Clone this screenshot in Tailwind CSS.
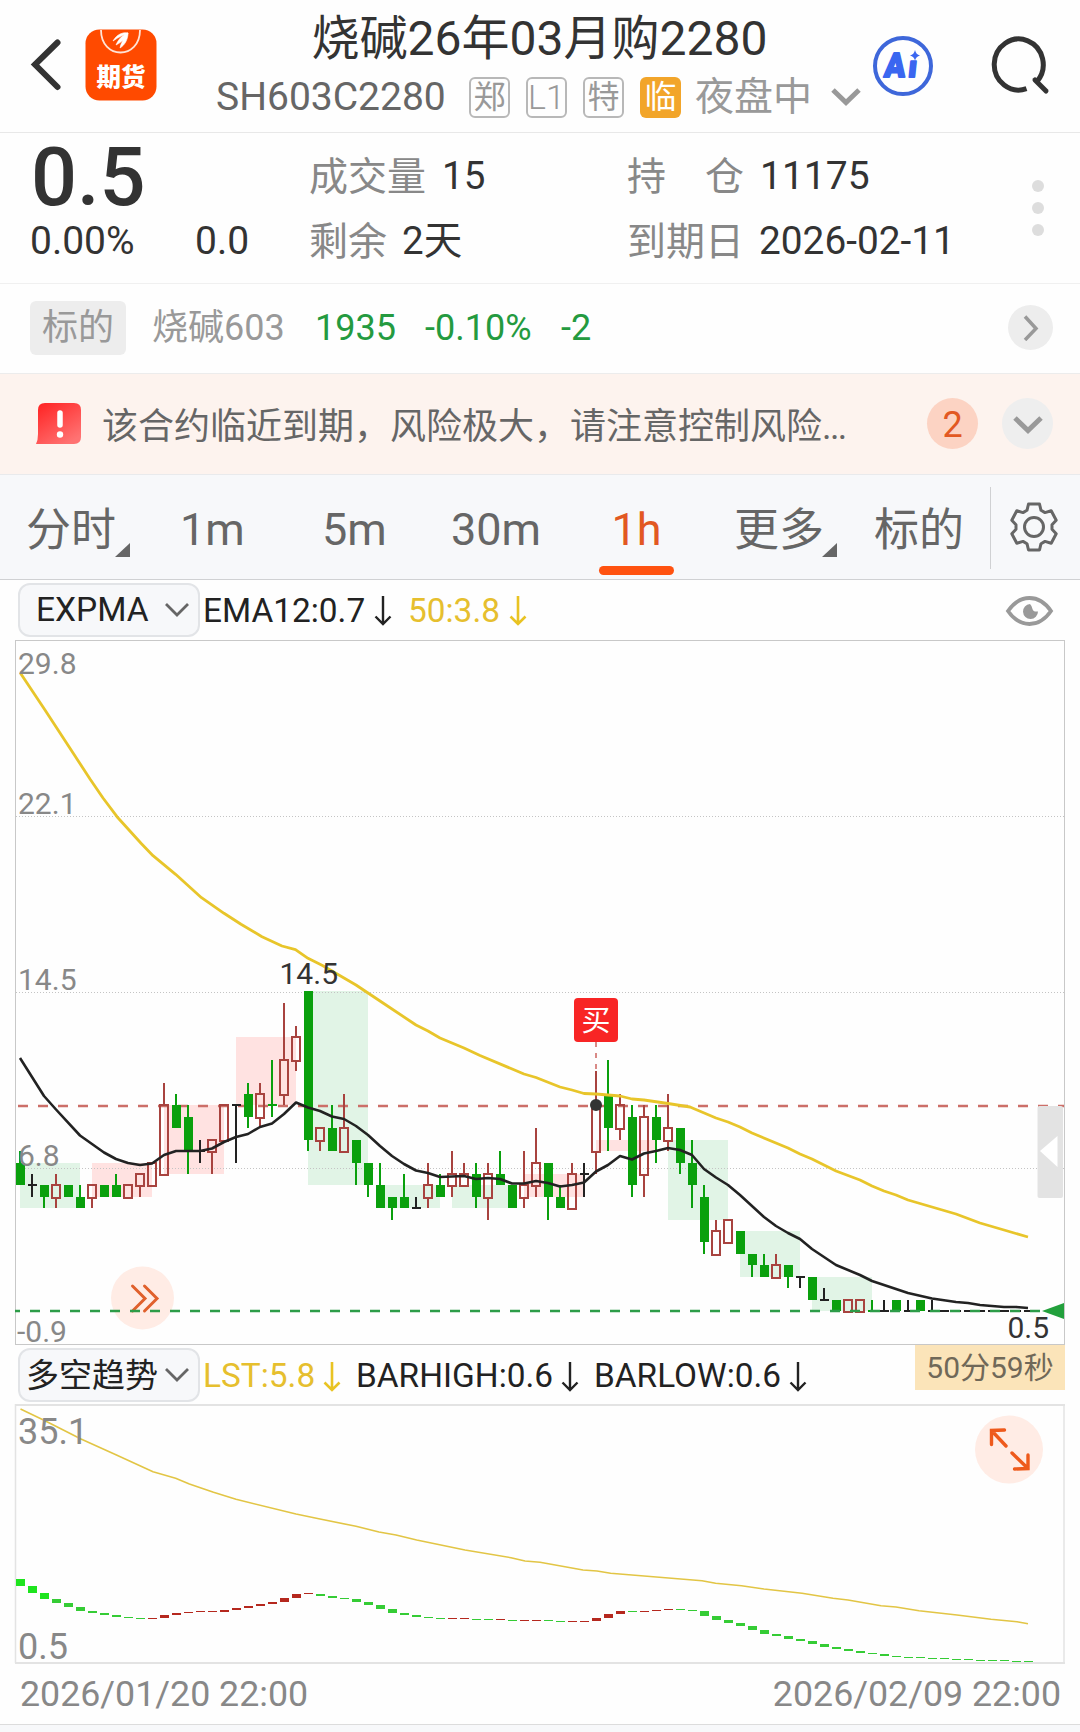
<!DOCTYPE html>
<html lang="zh-CN">
<head>
    <meta charset="UTF-8">
    <meta name="viewport" content="width=device-width, initial-scale=1.0">
    <title>烧碱26年03月购2280</title>
    <script src="https://cdn.jsdelivr.net/npm/@tailwindcss/browser@4"></script>
</head>
<body class="w-[1080px] h-[1732px] overflow-hidden bg-[#fefefe] font-['Roboto','Noto_Sans_CJK_SC',sans-serif] text-[#333]">

    <!-- title bar -->
    <header class="flex h-[133px] border-b border-[#e8e8e8]">
        <svg class="ml-[30px] mt-[38px] shrink-0" width="32" height="54" fill="none" stroke="#333" stroke-width="6" stroke-linecap="round" stroke-linejoin="miter">
            <path d="M27.500 4.500L5 26.500L27.500 49"/>
        </svg>
        <svg class="ml-[23px] mt-[29px] shrink-0" width="72" height="72">
            <rect x=".5" y=".5" width="71" height="71" rx="14" fill="#ff4a00"/>
            <path d="M16 1C16 31 55 31 55 1" fill="none" stroke="#ffe3d6" stroke-width="1.800"/>
            <path d="M28 12C32 5 38 3 43 4C38 6 34 8 28 12ZM31 16C34 9 39 5 43 4C41 9 37 13 31 16ZM35 19C36 13 40 8 43 4C43 10 40 16 35 19Z" fill="#fff" stroke="#fff" stroke-width=".6"/>
            <text x="36" y="56.500" text-anchor="middle" font-size="24.500" font-weight="900" fill="#fff">期货</text>
        </svg>
        <div class="ml-[60px] flex w-[645px] shrink-0 flex-col">
            <h1 class="mt-[9px] whitespace-nowrap text-center text-[48px] leading-[60px]">烧碱26年03月购2280</h1>
            <div class="mt-[7px] flex h-[42px] items-center whitespace-nowrap">
                <span class="-ml-px w-[253px] text-[39px] leading-[42px] text-[#666]">SH603C2280</span>
                <span class="flex h-[41px] w-[41px] items-center justify-center rounded-[6px] border-2 border-[#b8b8b8] text-[32px] leading-[40px] text-[#999]">郑</span>
                <span class="ml-[16px] flex h-[41px] w-[41px] items-center justify-center rounded-[6px] border-2 border-[#b8b8b8] text-[34px] font-light leading-[40px] text-[#999]">L1</span>
                <span class="ml-[16px] flex h-[41px] w-[41px] items-center justify-center rounded-[6px] border-2 border-[#b8b8b8] text-[32px] leading-[40px] text-[#999]">特</span>
                <span class="ml-[16px] flex h-[41px] w-[41px] items-center justify-center rounded-[6px] bg-[#f2a52a] text-[32px] leading-[40px] text-white">临</span>
                <span class="ml-[14px] w-[136px] text-[39px] leading-[44px] text-[#999]">夜盘中</span>
                <svg width="30" height="20" fill="none" stroke="#999" stroke-width="5"><path d="M2 3L15 15.500L28 3"/></svg>
            </div>
        </div>
        <svg class="ml-[10px] mt-[35px] shrink-0" width="62" height="62">
            <circle cx="31" cy="31" r="28" fill="none" stroke="#3e67da" stroke-width="4"/>
            <g transform="translate(5 0) skewX(-6)" fill="#3a66f0" stroke="#3a66f0" stroke-width="1.800" stroke-linejoin="round" font-weight="900">
                <text x="11" y="42.500" font-size="34" textLength="21" lengthAdjust="spacingAndGlyphs">A</text>
                <text x="35" y="42.500" font-size="30">ı</text>
            </g>
            <path d="M43 15Q44 19.500 48 20.500Q44 21.500 43 25.500Q42 21.500 38 20.500Q42 19.500 43 15Z" fill="#3a66f0"/>
        </svg>
        <svg class="ml-[57px] mt-[36px] shrink-0" width="60" height="60" fill="none" stroke="#333" stroke-width="5" stroke-linecap="round">
            <path d="M35.500 52.700A24.500 25.500 0 1 1 46 45.500" stroke-linecap="butt"/>
            <path d="M44 44L55 55"/>
        </svg>
    </header>

    <!-- quote summary -->
    <section class="flex h-[151px] border-b border-[#f0f0f0]">
        <div class="ml-[30px] w-[279px]">
            <div class="ml-px mt-[4px] text-[81px] font-medium leading-[82px]">0.5</div>
            <div class="mt-[2px] flex text-[39px] leading-[40px]">
                <span class="w-[165px]">0.00%</span>
                <span>0.0</span>
            </div>
        </div>
        <div class="w-[318px] text-[38.5px] leading-[50px]">
            <div class="mt-[18px] flex"><span class="mr-[16px] mt-px text-[39px] text-[#888]">成交量</span>15</div>
            <div class="mt-[14px] flex"><span class="mr-[15px] mt-px text-[39px] text-[#888]">剩余</span>2天</div>
        </div>
        <div class="w-[400px] text-[39px] leading-[50px]">
            <div class="mt-[18px] flex"><span class="mt-px text-[#888]">持　仓</span><span class="ml-[16px]">11175</span></div>
            <div class="mt-[14px] flex"><span class="mt-px text-[#888]">到期日</span><span class="ml-[15px] text-[38.8px]">2026-02-11</span></div>
        </div>
        <div class="ml-[5px] mt-[47px] flex flex-col gap-[10px]">
            <i class="h-[12px] w-[12px] rounded-full bg-[#ddd]"></i>
            <i class="h-[12px] w-[12px] rounded-full bg-[#ddd]"></i>
            <i class="h-[12px] w-[12px] rounded-full bg-[#ddd]"></i>
        </div>
    </section>

    <!-- underlying contract -->
    <section class="flex h-[90px] items-center border-b border-[#ececec] pb-[2px] text-[36px] leading-[54px]">
        <span class="ml-[30px] h-[54px] w-[96px] rounded-[6px] bg-[#ededed] text-center text-[#999]">标的</span>
        <span class="ml-[26px] w-[163px] text-[#999]">烧碱603</span>
        <span class="w-[110px] text-[#249a3f]">1935</span>
        <span class="w-[136px] text-[#249a3f]">-0.10%</span>
        <span class="text-[#249a3f]">-2</span>
        <span class="ml-auto mr-[27px] flex h-[45px] w-[45px] items-center justify-center rounded-full bg-[#ededed]">
            <svg width="16" height="26" fill="none" stroke="#999" stroke-width="3.500"><path d="M2 1.500L13 13.500L2 25"/></svg>
        </span>
    </section>

    <!-- expiry warning -->
    <section class="flex h-[101px] items-center border-b border-[#e9eaec] bg-[#fdf3ee]">
        <svg class="ml-[36px] mb-px" width="46" height="43">
            <defs><linearGradient id="warn" x1="0" y1="0" x2=".7" y2="1"><stop offset="0" stop-color="#ff2020"/><stop offset="1" stop-color="#ff7272"/></linearGradient></defs>
            <path d="M2 8Q2 1 9 1H38Q45 1 45 8V35Q45 42 38 42H0Q2 38 2 32Z" fill="url(#warn)"/>
            <path d="M24 11V23" stroke="#fff" stroke-width="5.500" stroke-linecap="round"/>
            <circle cx="24" cy="32.500" r="3.200" fill="#fff"/>
        </svg>
        <span class="ml-[20px] mt-[6px] w-[760px] whitespace-nowrap text-[36px] leading-[50px] text-[#666]">该合约临近到期，风险极大，请注意控制风险<span class="tracking-[-1.6px]">...</span></span>
        <span class="ml-[65px] mb-px flex h-[51px] w-[51px] items-center justify-center rounded-full bg-[#fcd3c3] pt-[3px] text-[36px] leading-[51px] text-[#e25822]">2</span>
        <span class="ml-[24px] mb-px flex h-[51px] w-[51px] items-center justify-center rounded-full bg-[#eee]">
            <svg class="mt-[2px]" width="30" height="20" fill="none" stroke="#999" stroke-width="5"><path d="M2 3L15 15.500L28 3"/></svg>
        </span>
    </section>

    <!-- period tabs -->
    <nav class="flex h-[105px] border-b border-[#d0d1d3] bg-[#f7f8fa] text-[45px] leading-[110px] text-[#666]">
        <div class="ml-[26px] flex w-[154px]"><span class="mt-px">分时</span><svg class="-ml-px mt-[68px]" width="16" height="15"><path d="M15 0V14H0Z" fill="#666"/></svg></div>
        <div class="w-[142px]">1m</div>
        <div class="w-[129px]">5m</div>
        <div class="w-[148px]">30m</div>
        <div class="w-[75px] text-center text-[#e25822]">
            <div class="h-[91px]">1h</div>
            <div class="h-[9px] rounded-full bg-[#ff5210]"></div>
        </div>
        <div class="ml-[60px] flex w-[140px]"><span class="mt-px">更多</span><svg class="-ml-[2px] mt-[68px]" width="16" height="15"><path d="M15 0V14H0Z" fill="#666"/></svg></div>
        <div class="mt-px w-[116px]">标的</div>
        <div class="mt-[12px] h-[82px] w-px bg-[#d0d1d3]"></div>
        <svg class="ml-[18px] mt-[27px]" width="50" height="50" viewBox="-25 -25 50 50" fill="none" stroke="#666" stroke-width="3" stroke-linejoin="round">
            <path d="M-5.500 -23H5.500L7 -16.700L11 -14.400L17.200 -16.250L22.200 -6.750L18 -2.300V2.300L22.200 6.750L17.200 16.250L11 14.400L7 16.700L5.500 23H-5.500L-7 16.700L-11 14.400L-17.200 16.250L-22.200 6.750L-18 2.300V-2.300L-22.200 -6.750L-17.200 -16.250L-11 -14.400L-7 -16.700Z"/>
            <circle r="9.500"/>
        </svg>
    </nav>

    <!-- main indicator row -->
    <div class="flex h-[60px] items-center whitespace-nowrap text-[33.4px] leading-[50px] text-[#222]">
        <div class="ml-[18px] flex h-[54px] w-[182px] items-center rounded-[12px] border-2 border-[#e2e4e7] bg-[#f7f8fa]">
            <span class="ml-[16px] w-[129px] -mt-px text-[33.500px]">EXPMA</span>
            <svg width="24" height="16" fill="none" stroke="#666" stroke-width="2.800"><path d="M1 2L12 13L23 2"/></svg>
        </div>
        <span class="ml-[3px] mt-px w-[171px]">EMA12:0.7</span>
        <svg class="mt-px mr-[16px]" width="18" height="30" fill="none" stroke="#222" stroke-width="2.400"><path d="M9 0V28M1.500 20.500L9 28L16.500 20.500"/></svg>
        <span class="mt-px w-[101px] text-[#e6bf2e]">50:3.8</span>
        <svg class="mt-px" width="18" height="30" fill="none" stroke="#e9c322" stroke-width="2.600"><path d="M9 0V28M1.500 20.500L9 28L16.500 20.500"/></svg>
        <svg class="ml-auto mr-[26px] mt-px" width="49" height="32" fill="none" stroke="#999" stroke-width="3.800">
            <path d="M3 16Q12 3 24.500 3T46 16Q37 29 24.500 29T3 16Z"/>
            <path d="M25 9A7.500 7.500 0 1 0 33 16.500Q28 17 27.500 14Q27 11 25 9Z" fill="#999" stroke="none"/>
        </svg>
    </div>

    <!-- candle chart -->
    <svg class="block" width="1080" height="705" viewBox="0 640 1080 705" font-size="30">
        <rect x="15.500" y="640.500" width="1049" height="704" fill="none" stroke="#c8c8c8"/>
        <g id="bands"></g>
        <g stroke="#c4c4c4" stroke-dasharray="1 2">
            <path d="M16 816.500H1064"/><path d="M16 992.500H1064"/><path d="M16 1168.500H1064"/>
        </g>
        <circle cx="142.500" cy="1298" r="31.500" fill="#ffece5"/>
        <path d="M132.500 1286L145 1298.500L132.500 1311M144.500 1286L157 1298.500L144.500 1311" fill="none" stroke="#e0602c" stroke-width="3" stroke-linecap="round"/>
        <path d="M18 1106H1064" stroke="#cc6f69" stroke-width="2.400" stroke-dasharray="10 10"/>
        <g id="candles"></g>
        <path d="M15 1311H1042" stroke="#2d9c48" stroke-width="2.400" stroke-dasharray="10 10" stroke-dashoffset="5"/>
        <path d="M1042 1311L1064 1303V1319Z" fill="#22a03c"/>
        <polyline fill="none" stroke="#e8c52a" stroke-width="2.800" stroke-linejoin="round" points="20,672.500 45,710 69,746.700 90,779 103,798 117,816.700 141,843.300 153,855.700 175.600,874.300 201.500,897.700 224,913.300 241,924.300 262,936.700 282,946 295.500,949.700 308,958.300 322,965.300 332,971 344,978 356,985 380,1001 416,1025 428,1031 440,1038 464,1048 480,1055.500 524,1074 536,1077.500 560,1087 572,1090 584,1093.500 596,1094 620,1096 632,1099 644,1100 668,1103.500 690,1107 716,1118 728,1122 740,1127 752,1133 788,1148 800,1154 812,1159 836,1171 860,1180 872,1186 884,1191 896,1195 908,1200 932,1207 956,1214 980,1223 1004,1230 1028,1237"/>
        <polyline fill="none" stroke="#222" stroke-width="2.600" stroke-linejoin="round" points="20,1058 44,1096 56,1109.500 80,1135.500 104,1152.500 116,1159 128,1163 140,1165 152,1163.500 164,1155 176,1151 200,1151 212,1148.500 224,1142 236,1137 248,1134 260,1127 272,1123.500 284,1114 296,1102.500 308,1107.500 320,1111 332,1116.500 344,1119 356,1126 368,1135 380,1146 392,1156 404,1164 416,1170.500 428,1173 440,1177 464,1176 476,1179 488,1178 500,1179 512,1183.500 524,1183.500 536,1181 548,1183 560,1186.500 572,1185 584,1182.500 596,1171.500 608,1165 620,1156 632,1159.500 644,1153.500 656,1151 668,1148 680,1150 692,1155 704,1169 716,1177.500 728,1185 740,1195 764,1217 776,1226 788,1233 800,1239 812,1249 836,1265 860,1275 872,1281 896,1289 908,1293 932,1298.500 956,1302 968,1303 980,1305 1004,1307 1016,1307 1028,1308"/>
        <g fill="#888">
            <text x="18" y="674">29.8</text>
            <text x="18" y="814">22.1</text>
            <text x="18" y="990">14.5</text>
            <text x="18" y="1165.500">6.8</text>
            <text x="17" y="1341.500">-0.9</text>
        </g>
        <text x="279.500" y="983.500" fill="#333">14.5</text>
        <text x="1007.500" y="1337.500" fill="#333">0.5</text>

        <!-- buy marker -->
        <path d="M596 1042V1072" stroke="#d98a86" stroke-width="2" stroke-dasharray="5 6"/>
        <circle cx="596" cy="1105" r="6" fill="#333"/>
        <rect x="574" y="998" width="44" height="44" rx="4" fill="#f82525"/>
        <text x="596" y="1031" text-anchor="middle" font-size="29" fill="#fff">买</text>

        <rect x="1037.500" y="1106" width="25.500" height="92" rx="2" fill="#e3e3e3"/>
        <path d="M1040 1151L1057.500 1136V1167Z" fill="#fff"/>
    </svg>

    <!-- sub indicator row -->
    <div class="flex h-[59px] whitespace-nowrap text-[33.4px] leading-[61px] text-[#222]">
        <div class="ml-[18px] mt-[3px] flex h-[54px] w-[182px] items-center rounded-[12px] border-2 border-[#e2e4e7] bg-[#f7f8fa] leading-[50px]">
            <span class="ml-[6px] mt-px w-[139px] text-[33px]">多空趋势</span>
            <svg width="24" height="16" fill="none" stroke="#666" stroke-width="2.800"><path d="M1 2L12 13L23 2"/></svg>
        </div>
        <span class="ml-[3px] w-[120px] text-[#e6bf2e]">LST:5.8</span>
        <svg class="mt-[17px]" width="18" height="30" fill="none" stroke="#e9c322" stroke-width="2.600"><path d="M9 0V28M1.500 20.500L9 28L16.500 20.500"/></svg>
        <span class="ml-[15px] w-[205px]">BARHIGH:0.6</span>
        <svg class="mt-[17px]" width="18" height="30" fill="none" stroke="#222" stroke-width="2.400"><path d="M9 0V28M1.500 20.500L9 28L16.500 20.500"/></svg>
        <span class="ml-[15px] w-[195px]">BARLOW:0.6</span>
        <svg class="mt-[17px]" width="18" height="30" fill="none" stroke="#222" stroke-width="2.400"><path d="M9 0V28M1.500 20.500L9 28L16.500 20.500"/></svg>
        <span class="ml-auto mr-[15px] h-[45px] w-[150px] bg-[#fbe4b9] text-center text-[30px] leading-[46px] text-[#706858]">50分59秒</span>
    </div>

    <!-- trend chart -->
    <svg class="block" width="1080" height="260" viewBox="0 1404 1080 260" font-size="36">
        <path d="M15.500 1404V1663M1064 1404V1663" stroke="#e3e3e3" stroke-width="1.500"/>
        <path d="M15 1405H1065M15 1663H1065" stroke="#e3e3e3" stroke-width="2"/>
        <g id="bars"></g>
        <polyline fill="none" stroke="#e2c545" stroke-width="1.600" stroke-linejoin="round" points="20.500,1409 45,1420.700 81,1439 117,1455.300 153,1471.700 175.600,1478.300 189.400,1484 213.500,1492.300 236,1499.300 296,1514 320,1519 356,1526.300 379,1532 396,1535 416.700,1540 465,1550 511,1557.700 525,1561 540,1562.300 583,1570 597,1571 610.600,1573.300 702,1580.700 715.600,1583.300 741.500,1585.700 764,1589 802,1593.300 833,1598.300 848,1600 881,1605.700 896,1607 919,1610.700 957,1615 991,1619.300 1017,1621.700 1028,1623.700"/>
        <text x="18" y="1444" fill="#888">35.1</text>
        <text x="18" y="1659" fill="#888">0.5</text>
        <circle cx="1009" cy="1449.500" r="34" fill="#ffece5"/>
        <path d="M1006 1446L991.500 1430.500M991.500 1444.500V1430.500L1004.500 1430M1012 1453L1028 1468.500M1028 1455V1468.500L1014.500 1469" fill="none" stroke="#ee5a1c" stroke-width="3.400" stroke-linecap="round"/>
    </svg>

    <footer class="flex h-[61px] justify-between border-b border-[#dcdcdc] pl-[20px] pr-[19px] text-[35.75px] leading-[61px] text-[#888]">
        <span>2026/01/20 22:00</span>
        <span>2026/02/09 22:00</span>
    </footer>
    <div class="h-[7px] bg-[#f7f8fa]"></div>

<script>
var NS = 'http://www.w3.org/2000/svg';
var GREEN = '#0aa00d', RED = '#a8433f', BLACK = '#222';

function draw(parent, tag, attrs) {
    var el = document.createElementNS(NS, tag);
    for (var key in attrs) el.setAttribute(key, attrs[key]);
    parent.appendChild(el);
}

// prices are in ticks of 0.5 above the last price
function yOf(tick) {
    return Math.round(1311 - tick * 11.42);
}

// first x, last x, top tick, bottom tick, direction
var bands = [
    [20, 80, 13, 9, 'g'], [92, 152, 13, 10, 'r'], [164, 224, 18, 12, 'r'], [236, 296, 24, 18, 'r'],
    [308, 368, 28, 11, 'g'], [380, 440, 11, 9, 'g'], [452, 512, 11, 9, 'g'], [524, 584, 12, 10, 'r'],
    [596, 656, 15, 14, 'r'], [668, 728, 15, 8, 'g'], [740, 800, 7, 3, 'g'], [812, 872, 3, 0, 'g']
];
bands.forEach(function (b) {
    draw(document.getElementById('bands'), 'rect', {
        x: b[0], y: yOf(b[2]), width: b[1] - b[0], height: yOf(b[3]) - yOf(b[2]),
        fill: b[4] === 'g' ? '#e1f4e6' : '#ffe2e1'
    });
});

// colour, body top, body bottom, high, low
var candles = [
    ['g',13,11,14,11], ['k',11,11,12,10], ['g',11,10,11,9], ['r',11,10,12,9], ['g',11,10,11,10],
    ['g',10,9,11,9], ['r',11,10,11,9], ['g',11,10,11,10], ['g',11,10,12,10], ['r',11,10,11,10],
    ['r',12,11,12,10], ['r',13,11,13,11], ['r',18,12,20,12], ['g',18,16,19,16], ['g',17,14,18,12],
    ['k',14,14,15,13], ['r',15,14,15,12], ['r',18,15,18,15], ['k',18,18,18,13], ['g',19,17,20,16],
    ['r',19,17,20,16], ['g',18,18,22,17], ['r',22,19,27,18], ['r',24,22,25,21], ['g',28,15,28,14],
    ['r',16,15,16,14], ['g',16,14,18,14], ['r',16,14,19,14], ['g',15,13,15,11], ['g',13,11,13,10],
    ['g',11,9,13,9], ['g',10,9,10,8], ['g',10,9,12,9], ['k',9,9,10,9], ['r',11,10,13,9],
    ['g',11,10,12,10], ['r',12,11,14,10], ['r',12,11,13,11], ['g',12,10,13,9], ['r',12,10,13,8],
    ['g',12,11,14,11], ['g',11,9,11,9], ['r',11,10,14,9], ['r',13,11,16,10], ['g',13,10,13,8],
    ['g',10,9,11,9], ['r',12,9,13,9], ['k',12,12,13,10], ['r',18,14,21,12], ['g',19,16,22,14],
    ['r',18,16,19,15], ['g',17,11,18,10], ['r',17,12,18,10], ['g',17,15,18,13], ['r',16,15,19,14],
    ['g',16,13,16,12], ['g',13,11,15,9], ['g',10,6,11,5], ['r',7,5,8,5], ['r',8,6,8,6],
    ['g',7,5,7,5], ['g',5,4,5,3], ['g',4,3,5,3], ['r',4,3,5,3], ['g',4,3,4,2],
    ['k',3,3,3,2], ['g',3,1,3,1], ['k',1,1,2,1], ['g',1,0,1,0], ['r',1,0,1,0],
    ['r',1,0,1,0], ['g',0,0,1,0], ['k',0,0,1,0], ['g',1,0,1,0], ['k',0,0,1,0],
    ['g',1,0,1,0], ['k',0,0,1,0], ['k',0,0,0,0], ['k',0,0,0,0], ['k',0,0,0,0],
    ['k',0,0,0,0], ['k',0,0,0,0], ['k',0,0,0,0], ['k',0,0,0,0], ['k',0,0,0,0]
];
candles.forEach(function (c, i) {
    var g = document.getElementById('candles');
    var x = 20 + i * 12;
    var color = c[0] === 'g' ? GREEN : c[0] === 'r' ? RED : BLACK;
    var top = yOf(c[1]), bottom = yOf(c[2]);
    if (c[3] > c[1]) draw(g, 'rect', { x: x - 1, y: yOf(c[3]), width: 2, height: top - yOf(c[3]), fill: color });
    if (c[4] < c[2]) draw(g, 'rect', { x: x - 1, y: bottom, width: 2, height: yOf(c[4]) - bottom, fill: color });
    if (top === bottom) {
        draw(g, 'rect', { x: x - 4, y: top - 1, width: 9, height: 2, fill: color });
    } else if (c[0] === 'r') {
        draw(g, 'rect', { x: x - 4, y: top, width: 8, height: bottom - top + 1, fill: 'none', stroke: color, 'stroke-width': 2 });
    } else {
        draw(g, 'rect', { x: x - 4, y: top, width: 9, height: bottom - top, fill: color });
    }
});

// colour, top and height of every trend bar
var bars = [
    ['g',1579,7], ['g',1586,7], ['g',1593,6], ['g',1599,4], ['g',1603,4], ['g',1607,4], ['g',1611,2],
    ['g',1613,2], ['g',1615,2], ['g',1617,1], ['g',1618,1], ['r',1618,1], ['r',1615,3], ['r',1613,2],
    ['r',1612,1], ['r',1611,1], ['r',1611,1], ['r',1610,2], ['r',1608,2], ['r',1606,2], ['r',1604,2],
    ['r',1602,2], ['r',1598,4], ['r',1594,4], ['r',1593,1], ['g',1594,2], ['g',1596,2], ['g',1598,1],
    ['g',1599,3], ['g',1602,3], ['g',1605,4], ['g',1609,4], ['g',1613,2], ['g',1615,2], ['g',1617,1],
    ['g',1618,1], ['r',1618,1], ['r',1618,1], ['g',1619,1], ['g',1619,1], ['r',1619,1], ['g',1620,1],
    ['r',1620,1], ['r',1620,1], ['g',1620,1], ['g',1621,1], ['r',1621,1], ['r',1621,1], ['r',1618,3],
    ['r',1614,4], ['r',1611,3], ['g',1611,1], ['r',1611,1], ['r',1610,1], ['r',1609,1], ['g',1609,1],
    ['g',1610,1], ['g',1611,5], ['g',1616,4], ['g',1620,3], ['g',1623,3], ['g',1626,4], ['g',1630,4],
    ['g',1634,2], ['g',1636,3], ['g',1639,2], ['g',1641,3], ['g',1644,3], ['g',1647,2], ['g',1649,2],
    ['g',1651,2], ['g',1653,1], ['g',1654,2], ['g',1656,1], ['g',1657,1], ['g',1657,1], ['g',1658,1],
    ['g',1658,1], ['g',1659,1], ['g',1659,1], ['g',1660,1], ['g',1660,1], ['g',1660,1], ['g',1661,1],
    ['g',1661,1]
];
bars.forEach(function (b, i) {
    draw(document.getElementById('bars'), 'rect', {
        x: 16 + i * 12, y: b[1], width: 9, height: b[2],
        fill: b[0] === 'r' ? '#b5281e' : b[2] > 5 ? '#1ee41e' : '#35cc35'
    });
});
</script>
</body>
</html>
